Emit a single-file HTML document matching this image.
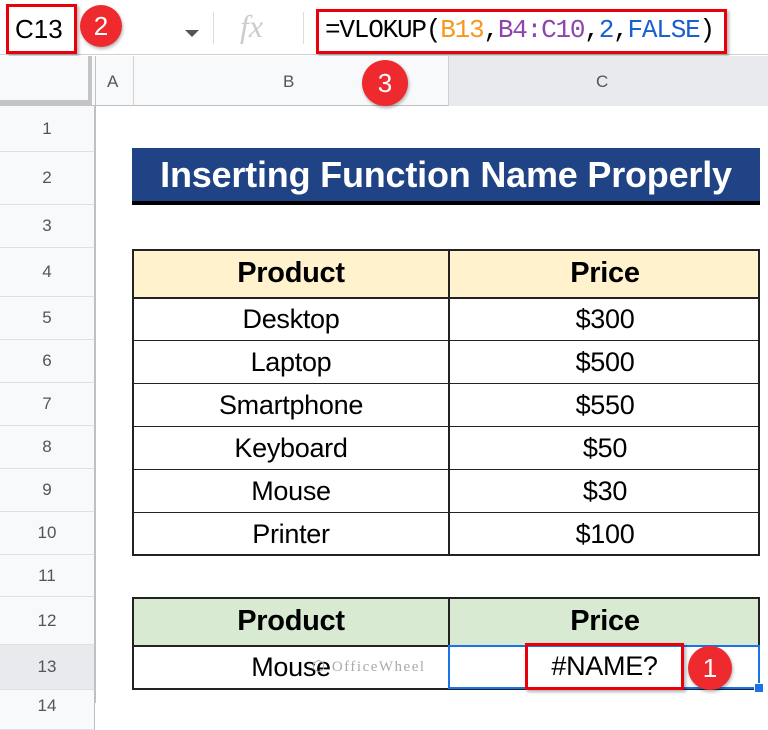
<!DOCTYPE html>
<html><head><meta charset="utf-8"><style>
*{margin:0;padding:0;box-sizing:border-box}
body{width:768px;height:703px;overflow:hidden;background:#fff;font-family:"Liberation Sans",Arial,sans-serif;position:relative}
.a{position:absolute}
.rh{position:absolute;left:0;width:95px;background:#f8f9fa;border-bottom:1px solid #e0e0e0;border-right:1px solid #c0c0c0;color:#555;font-size:17px;display:flex;align-items:center;justify-content:center}
.c{position:absolute;display:flex;align-items:center;justify-content:center;font-size:27px;color:#000;letter-spacing:-0.3px}
.circ{position:absolute;border-radius:50%;background:#ee2a2f;color:#fff;font-size:26px;display:flex;align-items:center;justify-content:center;box-shadow:1px 2px 3px rgba(0,0,0,.3)}
.b{font-weight:bold;font-size:29px}
</style></head><body>
<div class="a" style="left:0;top:0;width:768px;height:55px;background:#fff;border-bottom:1px solid #d0d0d0"></div>
<div class="a" style="left:6px;top:4px;width:71px;height:50px;border:3px solid #e8000b;box-shadow:2px 2px 3px rgba(0,0,0,.3)"></div>
<div class="a" style="left:15px;top:14px;font-size:26px;color:#000">C13</div>
<div class="circ" style="left:80px;top:5px;width:42px;height:42px">2</div>
<div class="a" style="left:185px;top:30px;width:0;height:0;border-left:7px solid transparent;border-right:7px solid transparent;border-top:7px solid #555"></div>
<div class="a" style="left:213px;top:12px;width:1px;height:32px;background:#ddd"></div>
<div class="a" style="left:240px;top:8px;font-family:'Liberation Serif',serif;font-style:italic;font-size:32px;color:#ccc">fx</div>
<div class="a" style="left:303px;top:12px;width:1px;height:32px;background:#ddd"></div>
<div class="a" style="left:316px;top:9px;width:411px;height:45px;border:3px solid #e8000b;box-shadow:2px 2px 3px rgba(0,0,0,.3)"></div>
<div class="a" style="left:325px;top:15px;font-family:'Liberation Mono',monospace;font-size:26px;letter-spacing:-1.2px;color:#000">=VLOKUP(<span style="color:#f7981d">B13</span>,<span style="color:#8e44ad">B4:C10</span>,<span style="color:#1a5fd0">2</span>,<span style="color:#1a5fd0">FALSE</span>)</div>
<div class="a" style="left:0;top:56px;width:768px;height:50px;background:#f8f9fa;border-bottom:1px solid #c0c0c0"></div>
<div class="a" style="left:0;top:100px;width:92px;height:6px;background:#c4c4c4"></div>
<div class="a" style="left:88px;top:56px;width:4px;height:50px;background:#c4c4c4"></div>
<div class="a" style="left:95px;top:56px;width:1px;height:647px;background:#c0c0c0"></div>
<div class="a" style="left:133px;top:56px;width:1px;height:50px;background:#d0d0d0"></div>
<div class="a" style="left:448px;top:56px;width:320px;height:50px;background:#e8eaed;border-left:1px solid #d0d0d0"></div>
<div class="a" style="left:107px;top:72px;font-size:17px;color:#555">A</div>
<div class="a" style="left:283px;top:72px;font-size:17px;color:#555">B</div>
<div class="a" style="left:596px;top:72px;font-size:17px;color:#555">C</div>
<div class="circ" style="left:362px;top:60px;width:46px;height:46px">3</div>
<div class="rh" style="top:106px;height:46px">1</div>
<div class="rh" style="top:152px;height:53px">2</div>
<div class="rh" style="top:205px;height:43px">3</div>
<div class="rh" style="top:248px;height:49px">4</div>
<div class="rh" style="top:297px;height:43px">5</div>
<div class="rh" style="top:340px;height:43px">6</div>
<div class="rh" style="top:383px;height:43px">7</div>
<div class="rh" style="top:426px;height:43px">8</div>
<div class="rh" style="top:469px;height:43px">9</div>
<div class="rh" style="top:512px;height:43px">10</div>
<div class="rh" style="top:555px;height:42px">11</div>
<div class="rh" style="top:597px;height:48px">12</div>
<div class="rh" style="top:645px;height:45px;background:#e8eaed">13</div>
<div class="rh" style="top:690px;height:40px;align-items:flex-start;padding-top:6px">14</div>
<div class="a" style="left:132px;top:148px;width:628px;height:57px;background:#1f4384;border-bottom:4px solid #000;color:#fff;font-weight:bold;font-size:36px;display:flex;align-items:center;justify-content:center;letter-spacing:-0.2px">Inserting Function Name Properly</div>
<div class="a" style="left:132px;top:249px;width:628px;height:307px;border:2px solid #222"></div>
<div class="a" style="left:134px;top:251px;width:624px;height:46px;background:#fff2cc"></div>
<div class="a" style="left:448px;top:249px;width:2px;height:307px;background:#222"></div>
<div class="a" style="left:132px;top:297px;width:628px;height:2px;background:#222"></div>
<div class="a" style="left:132px;top:340px;width:628px;height:1px;background:#222"></div>
<div class="a" style="left:132px;top:383px;width:628px;height:1px;background:#222"></div>
<div class="a" style="left:132px;top:426px;width:628px;height:1px;background:#222"></div>
<div class="a" style="left:132px;top:469px;width:628px;height:1px;background:#222"></div>
<div class="a" style="left:132px;top:512px;width:628px;height:1px;background:#222"></div>
<div class="c b" style="left:134px;top:250px;width:314px;height:47px">Product</div>
<div class="c b" style="left:450px;top:250px;width:310px;height:47px">Price</div>
<div class="c" style="left:134px;top:298px;width:314px;height:42px">Desktop</div>
<div class="c" style="left:450px;top:298px;width:310px;height:42px">$300</div>
<div class="c" style="left:134px;top:341px;width:314px;height:42px">Laptop</div>
<div class="c" style="left:450px;top:341px;width:310px;height:42px">$500</div>
<div class="c" style="left:134px;top:384px;width:314px;height:42px">Smartphone</div>
<div class="c" style="left:450px;top:384px;width:310px;height:42px">$550</div>
<div class="c" style="left:134px;top:427px;width:314px;height:42px">Keyboard</div>
<div class="c" style="left:450px;top:427px;width:310px;height:42px">$50</div>
<div class="c" style="left:134px;top:470px;width:314px;height:42px">Mouse</div>
<div class="c" style="left:450px;top:470px;width:310px;height:42px">$30</div>
<div class="c" style="left:134px;top:513px;width:314px;height:42px">Printer</div>
<div class="c" style="left:450px;top:513px;width:310px;height:42px">$100</div>
<div class="a" style="left:132px;top:597px;width:628px;height:93px;border:2px solid #222"></div>
<div class="a" style="left:134px;top:599px;width:624px;height:46px;background:#d9ead3"></div>
<div class="a" style="left:448px;top:597px;width:2px;height:93px;background:#222"></div>
<div class="a" style="left:132px;top:645px;width:628px;height:2px;background:#222"></div>
<div class="c b" style="left:134px;top:598px;width:314px;height:47px">Product</div>
<div class="c b" style="left:450px;top:598px;width:310px;height:47px">Price</div>
<div class="c" style="left:134px;top:646px;width:314px;height:43px">Mouse</div>
<div class="a" style="left:312px;top:657px;font-family:'Liberation Serif',serif;font-size:15px;color:#aaa;letter-spacing:1.5px">⬡ OfficeWheel</div>
<div class="a" style="left:448px;top:645px;width:312px;height:44px;border:2px solid #1a73e8"></div>
<div class="a" style="left:754px;top:683px;width:10px;height:10px;background:#1a73e8;border:1px solid #fff"></div>
<div class="a" style="left:525px;top:643px;width:159px;height:47px;border:3px solid #e8000b;box-shadow:2px 2px 3px rgba(0,0,0,.3)"></div>
<div class="c" style="left:528px;top:646px;width:153px;height:41px">#NAME?</div>
<div class="circ" style="left:688px;top:646px;width:44px;height:44px">1</div>
</body></html>
